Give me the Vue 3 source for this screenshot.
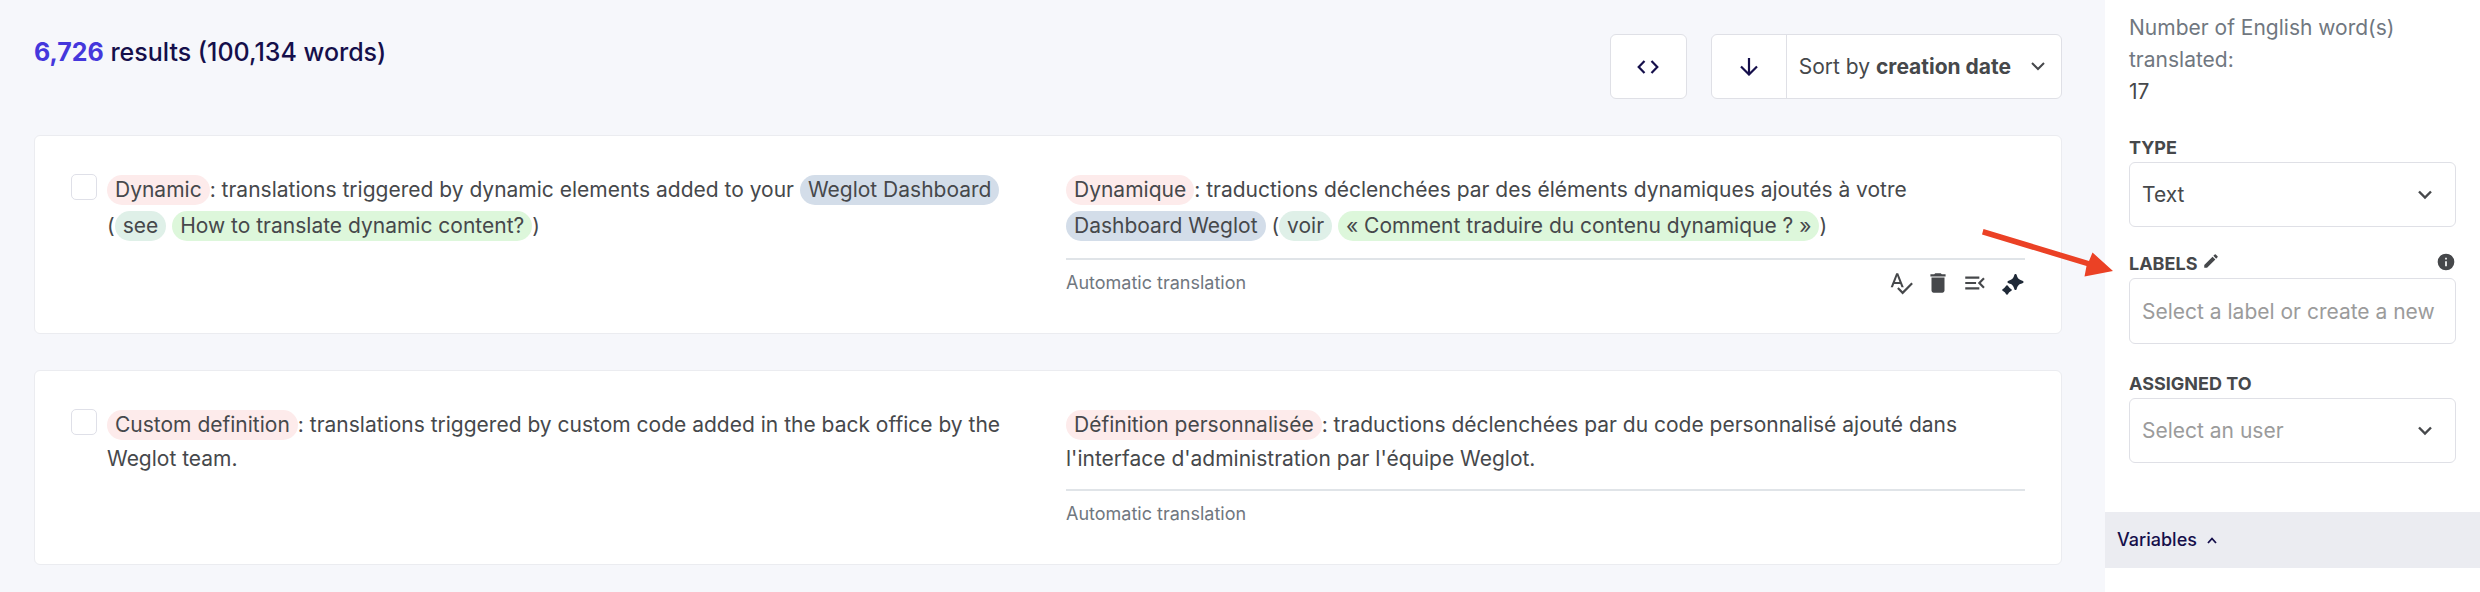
<script setup>
import { ref } from 'vue'

const sort = ref('creation date')
const type = ref('Text')
const user = ref('')
const label = ref('')

const rows = ref([
  {
    id: 1,
    selected: false,
    actions: true,
    source: [
      { tag: 'rose', text: 'Dynamic' },
      { text: ': translations triggered by dynamic elements added to your ' },
      { tag: 'blue', text: 'Weglot Dashboard' },
      { text: ' (' },
      { tag: 'teal', text: 'see' },
      { text: ' ' },
      { tag: 'green', text: 'How to translate dynamic content?' },
      { text: ')' },
    ],
    target: [
      { tag: 'rose', text: 'Dynamique' },
      { text: ': traductions déclenchées par des éléments dynamiques ajoutés à votre ' },
      { tag: 'blue', text: 'Dashboard Weglot' },
      { text: ' (' },
      { tag: 'teal', text: 'voir' },
      { text: ' ' },
      { tag: 'green', text: '« Comment traduire du contenu dynamique ? »' },
      { text: ')' },
    ],
  },
  {
    id: 2,
    selected: false,
    actions: false,
    source: [
      { tag: 'rose', text: 'Custom definition' },
      { text: ': translations triggered by custom code added in the back office by the Weglot team.' },
    ],
    target: [
      { tag: 'rose', text: 'Définition personnalisée' },
      { text: ": traductions déclenchées par du code personnalisé ajouté dans l'interface d'administration par l'équipe Weglot." },
    ],
  },
])
</script>

<template>
  <div class="page">
    <main class="main">
      <header class="header">
        <h1 class="title"><strong>6,726</strong> results (100,134 words)</h1>
        <div class="tools">
          <button class="tool code" type="button" aria-label="Show code">
            <svg width="22" height="14" viewBox="0 0 22 14" fill="none" stroke="currentColor" stroke-width="2.2">
              <path d="M7.5 1 1.7 7l5.8 6M14.5 1l5.8 6-5.8 6" />
            </svg>
          </button>
          <div class="sort">
            <button class="tool direction" type="button" aria-label="Sort direction">
              <svg width="18" height="18" viewBox="0 0 18 18" fill="none" stroke="currentColor" stroke-width="2.2">
                <path d="M9 0v16M1 8.5l8 8 8-8" />
              </svg>
            </button>
            <label class="sort-field">
              <span>Sort by</span>
              <select v-model="sort" class="sort-select">
                <option>creation date</option>
              </select>
              <svg class="sort-chevron" width="14" height="9" viewBox="0 0 14 9" fill="none" stroke="currentColor" stroke-width="2">
                <path d="m1 1 6 6 6-6" />
              </svg>
            </label>
          </div>
        </div>
      </header>

      <article v-for="row in rows" :key="row.id" class="card">
        <div class="source">
          <input v-model="row.selected" class="check" type="checkbox" :aria-label="'Select translation ' + row.id" />
          <p class="text"><template v-for="(part, i) in row.source" :key="i"><span v-if="part.tag" class="tag" :class="part.tag">{{ part.text }}</span><template v-else>{{ part.text }}</template></template></p>
        </div>
        <div class="target">
          <p class="text"><template v-for="(part, i) in row.target" :key="i"><span v-if="part.tag" class="tag" :class="part.tag">{{ part.text }}</span><template v-else>{{ part.text }}</template></template></p>
          <footer class="meta">
            <span>Automatic translation</span>
            <div v-if="row.actions" class="actions">
              <button class="action" type="button" aria-label="Mark as reviewed">
                <svg width="26" height="26" viewBox="0 0 24 24" fill="currentColor">
                  <path d="M12.45 16h2.09L9.43 3H7.57L2.46 16h2.09l1.12-3h5.64l1.14 3zm-6.02-5L8.5 5.48 10.57 11H6.43zm15.16.59-8.09 8.09L9.83 16l-1.41 1.41 5.09 5.09L23 13l-1.41-1.41z" />
                </svg>
              </button>
              <button class="action" type="button" aria-label="Delete">
                <svg width="26" height="26" viewBox="0 0 24 24" fill="currentColor">
                  <path d="M6 19c0 1.1.9 2 2 2h8c1.1 0 2-.9 2-2V7H6v12zM19 4h-3.5l-1-1h-5l-1 1H5v2h14V4z" />
                </svg>
              </button>
              <button class="action" type="button" aria-label="Open details">
                <svg width="26" height="26" viewBox="0 0 24 24" fill="currentColor">
                  <path d="M3 18h13v-2H3v2zm0-5h10v-2H3v2zm0-7v2h13V6H3zm18 9.59L17.42 12 21 8.41 19.59 7l-5 5 5 5L21 15.59z" />
                </svg>
              </button>
              <button class="action spark" type="button" aria-label="Suggest with AI">
                <svg width="26" height="26" viewBox="0 0 26 26" fill="currentColor">
                  <path d="M16.5 4c.7 0 1 .4 1.2 1.1 1 3.5 2 4.600 5.700 5.700.8.3 1.100.6 1.100 1.200s-.3.9-1.100 1.200c-3.700 1.100-4.700 2.200-5.700 5.700-.2.7-.5 1.100-1.200 1.100s-1-.4-1.200-1.100c-1-3.500-2-4.600-5.700-5.700-.8-.3-1.100-.6-1.100-1.200s.3-.9 1.100-1.200c3.700-1.100 4.700-2.200 5.700-5.700.2-.7.5-1.100 1.200-1.100z" />
                  <path d="M8 15.200c.5 0 .8.300 1.100.8.7 1.300 1.400 2 2.900 2.900.6.3.9.600.9 1.100s-.3.800-.9 1.100c-1.500.900-2.200 1.600-2.900 2.900-.3.500-.6.800-1.100.8s-.8-.3-1.100-.8c-.7-1.300-1.400-2-2.900-2.900-.6-.3-.9-.6-.9-1.100s.3-.8.900-1.100c1.500-.9 2.200-1.600 2.900-2.900.3-.5.600-.8 1.100-.8z" />
                </svg>
              </button>
            </div>
          </footer>
        </div>
      </article>
    </main>

    <aside class="side">
      <div class="panel">
        <dl class="count">
          <dt>Number of English word(s) translated:</dt>
          <dd>17</dd>
        </dl>

        <div class="field">
          <label class="name" for="type">TYPE</label>
          <div class="control">
            <select id="type" v-model="type" class="box">
              <option>Text</option>
            </select>
            <svg class="chevron" width="14" height="10" viewBox="0 0 14 10" fill="none" stroke="currentColor" stroke-width="2.4">
              <path d="m1 1.5 6 6 6-6" />
            </svg>
          </div>
        </div>

        <div class="field labels">
          <div class="name-row">
            <label class="name" for="labels">LABELS</label>
            <button class="icon-button" type="button" aria-label="Edit labels">
              <svg width="18" height="18" viewBox="0 0 24 24" fill="currentColor">
                <path d="M3 17.25V21h3.75L17.81 9.94l-3.75-3.75L3 17.25zM20.71 7.04c.39-.39.39-1.02 0-1.41l-2.34-2.34a.996.996 0 0 0-1.41 0l-1.83 1.83 3.75 3.75 1.83-1.83z" />
              </svg>
            </button>
            <button class="icon-button info" type="button" aria-label="About labels">
              <svg width="20" height="20" viewBox="0 0 24 24" fill="currentColor">
                <path d="M12 2a10 10 0 1 0 0 20 10 10 0 0 0 0-20zm1 15h-2v-6h2v6zm0-8h-2V7h2v2z" />
              </svg>
            </button>
          </div>
          <input id="labels" v-model="label" class="box" type="text" placeholder="Select a label or create a new" />
          <svg class="pointer" width="132" height="50" viewBox="0 0 132 50" aria-hidden="true">
            <path d="M1.5 1 0 6.5 104.500 38 102.500 48.500 131 43 110.500 24.500 107 33z" fill="#eb4125" />
          </svg>
        </div>

        <div class="field">
          <label class="name" for="user">ASSIGNED TO</label>
          <div class="control">
            <select id="user" v-model="user" class="box empty">
              <option value="">Select an user</option>
            </select>
            <svg class="chevron" width="14" height="10" viewBox="0 0 14 10" fill="none" stroke="currentColor" stroke-width="2.4">
              <path d="m1 1.5 6 6 6-6" />
            </svg>
          </div>
        </div>
      </div>

      <button class="variables" type="button" aria-expanded="true">
        Variables
        <svg width="10" height="7" viewBox="0 0 10 7" fill="none" stroke="currentColor" stroke-width="1.8">
          <path d="m1 6 4-4.500L9 6" />
        </svg>
      </button>
    </aside>
  </div>
</template>

<style>
body {
  margin: 0;
}
</style>

<style scoped>
.page,
.page * {
  box-sizing: border-box;
}
.page {
  display: flex;
  min-height: 100vh;
  background: #f6f7fb;
  color: #46484b;
  font-family: Inter, "Liberation Sans", sans-serif;
  font-size: 21px;
  line-height: 32px;
}
button,
select,
input {
  font: inherit;
  color: inherit;
  margin: 0;
}
button {
  border: 0;
  padding: 0;
  background: none;
  cursor: pointer;
}
svg {
  display: block;
}
.main {
  flex: 1;
  min-width: 0;
  padding: 34px 43px 26px 34px;
  display: flex;
  flex-direction: column;
  gap: 36px;
}
.header {
  display: flex;
  justify-content: space-between;
  align-items: flex-start;
}
.title {
  margin: 0;
  font-size: 25px;
  line-height: 36px;
  font-weight: 500;
  font-optical-sizing: none;
  color: #150f4b;
}
.title strong {
  font-weight: 700;
  color: #4537dc;
}
.tools {
  display: flex;
  gap: 24px;
}
.tool {
  display: flex;
  align-items: center;
  justify-content: center;
  color: #150f4b;
}
.code,
.sort {
  height: 65px;
  background: #fff;
  border: 1px solid #dfe0e6;
  border-radius: 6px;
}
.code {
  width: 77px;
}
.sort {
  display: flex;
}
.direction {
  width: 75px;
  border-right: 1px solid #dfe0e6;
}
.sort-field {
  display: flex;
  align-items: center;
  padding: 0 16px 0 12px;
}
.sort-select {
  appearance: none;
  border: 0;
  padding: 0 0 0 6px;
  background: none;
  font-weight: 700;
}
.sort-chevron {
  margin-left: 19px;
}
.card {
  display: grid;
  grid-template-columns: 1fr 1fr;
  gap: 36px;
  padding: 36px;
  background: #fff;
  border: 1px solid #ebecf0;
  border-radius: 6px;
}
.source {
  display: flex;
  align-items: flex-start;
  gap: 10px;
  padding-right: 24px;
}
.check {
  appearance: none;
  flex: none;
  width: 26px;
  height: 26px;
  margin-top: 2px;
  border: 1px solid #dfe0e8;
  border-radius: 5px;
  background: #fff;
}
.text {
  margin: 0;
}
.tag {
  display: inline-block;
  margin: 3px 0;
  padding: 0 8px;
  border-radius: 15px;
  line-height: 30px;
}
.rose {
  background: #fdebeb;
}
.blue {
  background: #d3dde9;
}
.teal {
  background: #dff0e8;
}
.green {
  background: #ddf7db;
}
.meta {
  display: flex;
  justify-content: space-between;
  margin-top: 14px;
  padding-top: 9px;
  border-top: 2px solid #e0e4e8;
  font-size: 18px;
  line-height: 28px;
  font-optical-sizing: none;
  color: #707780;
}
.actions {
  display: flex;
  align-items: center;
  gap: 11px;
  color: #46484b;
}
.spark {
  color: #1f2937;
}
.side {
  flex: none;
  width: 375px;
  background: #fff;
}
.panel {
  padding: 12px 24px 49px;
}
.count {
  margin: 0;
}
.count dt {
  color: #707780;
}
.count dd {
  margin: 0;
}
.field {
  margin-top: 28px;
}
.labels {
  position: relative;
  margin-top: 25px;
}
.labels .box {
  height: 66px;
}
.name {
  display: block;
  font-size: 18px;
  line-height: 24px;
  font-weight: 700;
  margin-bottom: 2px;
}
.name-row {
  display: flex;
  align-items: flex-start;
}
.icon-button {
  margin-left: 5px;
}
.info {
  margin-left: auto;
}
.control {
  position: relative;
}
.box {
  display: block;
  appearance: none;
  width: 100%;
  height: 65px;
  padding: 0 12px;
  border: 1px solid #dfe0e6;
  border-radius: 6px;
  background: #fff;
}
.empty,
.box::placeholder {
  color: #9b9b9b;
  opacity: 1;
}
.chevron {
  position: absolute;
  right: 24px;
  top: 28px;
  pointer-events: none;
}
.pointer {
  position: absolute;
  right: 100%;
  top: -24px;
  margin-right: 15px;
  pointer-events: none;
}
.variables {
  display: flex;
  align-items: center;
  gap: 10px;
  width: 100%;
  height: 56px;
  padding: 0 12px;
  background: #ebecf1;
  color: #150f4b;
  font-size: 18px;
  font-weight: 500;
}
</style>
